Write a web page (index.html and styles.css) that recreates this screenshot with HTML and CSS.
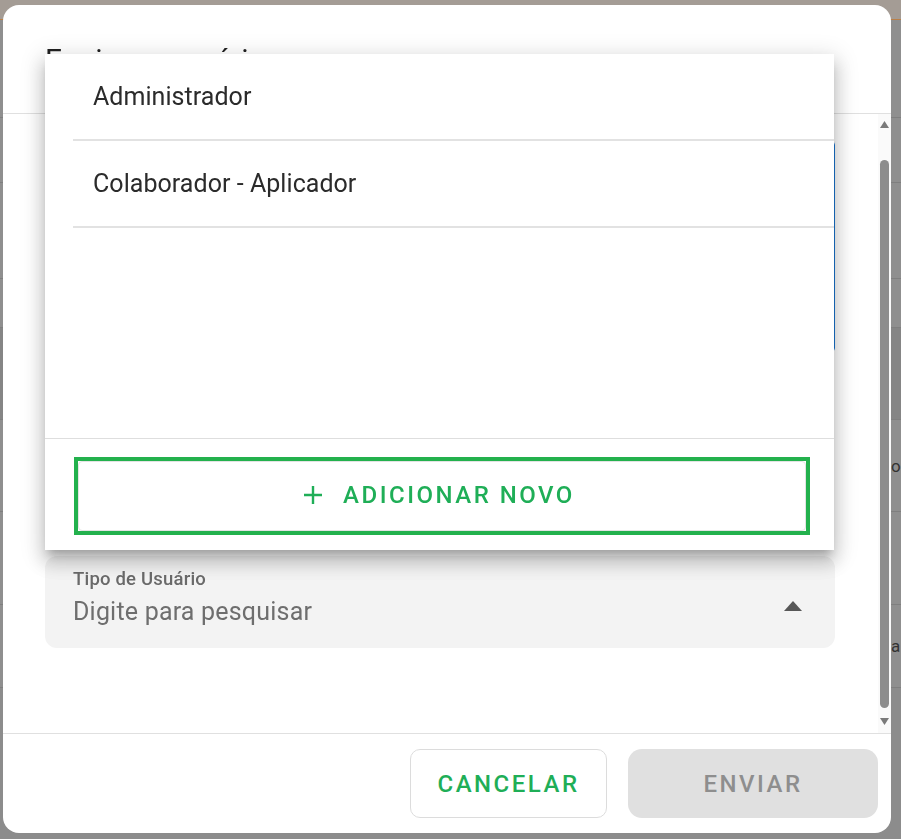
FILE: index.html
```html
<!DOCTYPE html>
<html lang="pt-BR">
<head>
<meta charset="utf-8">
<title>Tipo de Usuário</title>
<link rel="stylesheet" href="styles.css">
</head>
<body>
<div class="page">
  <div class="page-top"></div>
  <div class="page-row h98"></div>
  <div class="page-row h65"></div>
  <div class="page-row h96"></div>
  <div class="page-row h49"></div>
  <div class="page-row band h92"></div>
  <div class="page-row h92"><span class="page-text">o</span></div>
  <div class="page-row h93"></div>
  <div class="page-row h83"><span class="page-text">a</span></div>
  <div class="page-row last"></div>
</div>

<div class="dialog">
  <header class="dlg-head">
    <h2 class="dlg-title">Equipe e usuários</h2>
  </header>
  <div class="dlg-body">
    <div class="dlg-content">
      <div class="field-focus"></div>
      <div class="select-field">
        <div class="select-text">
          <span class="select-label">Tipo de Usuário</span>
          <span class="select-value">Digite para pesquisar</span>
        </div>
        <svg class="select-arrow" width="18" height="10" viewBox="0 0 18 10"><path d="M0 10 L9 0 L18 10 Z" fill="#575757"/></svg>
      </div>
    </div>
    <div class="scrollbar">
      <svg class="sb-arrow up" width="9" height="7" viewBox="0 0 9 7"><path d="M0 7 L4.5 0 L9 7 Z" fill="#7a7a7a"/></svg>
      <div class="sb-thumb"></div>
      <svg class="sb-arrow down" width="9" height="7" viewBox="0 0 9 7"><path d="M0 0 L4.5 7 L9 0 Z" fill="#7a7a7a"/></svg>
    </div>
  </div>
  <footer class="dlg-foot">
    <button class="btn btn-cancel">CANCELAR</button>
    <button class="btn btn-send" disabled>ENVIAR</button>
  </footer>

  <div class="menu">
    <ul class="menu-list">
      <li class="menu-item">Administrador</li>
      <li class="menu-item">Colaborador - Aplicador</li>
    </ul>
    <div class="menu-foot">
      <div class="add-ring">
        <button class="add-btn">
          <svg class="add-plus" width="18" height="18" viewBox="0 0 18 18"><path d="M9 0 V18 M0 9 H18" stroke="#1fae57" stroke-width="2.4"/></svg>
          <span>ADICIONAR NOVO</span>
        </button>
      </div>
    </div>
  </div>
</div>
</body>
</html>
```
FILE: styles.css
```css
* { box-sizing: border-box; }
html, body { margin: 0; padding: 0; }
body {
  width: 901px;
  height: 839px;
  overflow: hidden;
  background: #7c7c7c;
  font-family: Roboto, "Liberation Sans", sans-serif;
}

/* dimmed page behind the dialog */
.page { display: flex; flex-direction: column; }
.page-top { height: 20px; background: #a49c95; border-bottom: 1px solid #b97f47; }
.page-row { background: #8f8f8f; border-bottom: 1px solid #7f7f7f; display: flex; align-items: center; }
.h98 { height: 98px; }
.h65 { height: 65px; }
.h96 { height: 96px; }
.h49 { height: 49px; }
.h92 { height: 92px; }
.h93 { height: 93px; }
.h83 { height: 83px; }
.band { background: #858585; }
.last { height: 160px; background: #8c8c8c; border-bottom: none; }
.page-text { padding-left: 891px; font-size: 17px; color: #333; white-space: nowrap; }

/* dialog */
.dialog {
  position: fixed;
  left: 3px;
  top: 5px;
  width: 888px;
  height: 828px;
  background: #fff;
  border-radius: 16px;
  overflow: hidden;
  display: flex;
  flex-direction: column;
}
.dlg-head {
  height: 109px;
  flex: none;
  border-bottom: 1px solid #e0e0e0;
  padding: 37px 42px 0;
}
.dlg-title {
  margin: 0;
  font-size: 30px;
  line-height: 36px;
  font-weight: 400;
  color: #222;
}
.dlg-body {
  flex: 1;
  display: flex;
  min-height: 0;
}
.dlg-content {
  flex: 1;
  padding: 27px 43px 0 42px;
}
.field-focus {
  height: 211px;
  border: 1px solid #1976d2;
  border-radius: 4px;
}
.select-field {
  margin-top: 204px;
  height: 92px;
  background: #f3f3f3;
  border-radius: 12px;
  padding: 12px 33px 0 28px;
  display: flex;
  align-items: flex-start;
  justify-content: space-between;
}
.select-text { display: flex; flex-direction: column; }
.select-label {
  font-size: 18.5px;
  line-height: 22px;
  font-weight: 500;
  color: #6a6a6a;
  letter-spacing: 0.2px;
}
.select-value {
  margin-top: 6px;
  font-size: 25px;
  line-height: 32px;
  color: #6e6e6e;
  letter-spacing: 0.2px;
}
.select-arrow { margin-top: 33px; }

.scrollbar {
  width: 13px;
  flex: none;
  background: #fafafa;
  display: flex;
  flex-direction: column;
  align-items: center;
  padding: 7px 0 8px;
}
.sb-arrow { flex: none; }
.sb-thumb {
  width: 9px;
  margin: 32px 0 10px;
  flex: 1;
  background: #8d8d8d;
  border-radius: 5px;
}

.dlg-foot {
  flex: none;
  height: 100px;
  border-top: 1px solid #e0e0e0;
  padding: 15px 13px 15px 0;
  display: flex;
  justify-content: flex-end;
  gap: 21px;
}
.btn {
  height: 69px;
  font-family: Roboto, "Liberation Sans", sans-serif;
  font-size: 24px;
  font-weight: 500;
  letter-spacing: 2.5px;
  cursor: pointer;
}
.btn-cancel {
  width: 197px;
  background: #fff;
  border: 1px solid #dcdcdc;
  border-radius: 10px;
  color: #1fae57;
}
.btn-send {
  width: 250px;
  background: #e0e0e0;
  border: none;
  border-radius: 14px;
  color: #8e8e8e;
}

/* dropdown menu overlay */
.menu {
  position: absolute;
  left: 42px;
  top: 49px;
  width: 789px;
  height: 496px;
  background: #fff;
  display: flex;
  flex-direction: column;
  box-shadow: 0 8px 8px -4px rgba(0,0,0,0.2), 0 12px 16px 2px rgba(0,0,0,0.14), 0 5px 22px 4px rgba(0,0,0,0.12);
}
.menu-list {
  list-style: none;
  margin: 0;
  padding: 0;
  flex: 1;
}
.menu-item {
  height: 87px;
  margin-left: 28px;
  padding-left: 20px;
  border-bottom: 2px solid #e2e2e2;
  display: flex;
  align-items: center;
  font-size: 25px;
  color: #2b2b2b;
  letter-spacing: 0.05px;
}
.menu-foot {
  height: 112px;
  flex: none;
  border-top: 1px solid #dedede;
  padding: 18px 24px 0 29px;
}
.add-ring {
  height: 78px;
  border: 4px solid #23b14d;
}
.add-btn {
  width: 100%;
  height: 100%;
  background: #fff;
  border: 1px solid #e3e3e3;
  border-radius: 4px;
  display: flex;
  align-items: center;
  justify-content: center;
  gap: 21px;
  font-family: Roboto, "Liberation Sans", sans-serif;
  font-size: 24px;
  font-weight: 500;
  letter-spacing: 2.5px;
  color: #1fae57;
  padding: 0 5px 3px 0;
}
```
